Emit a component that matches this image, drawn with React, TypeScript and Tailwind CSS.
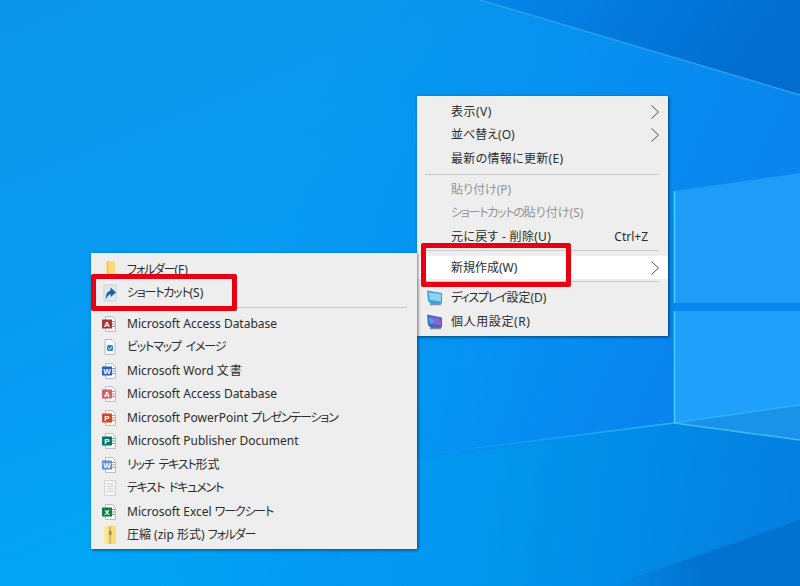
const Wallpaper = () => (
  <svg className="absolute inset-0 w-[800px] h-[586px]" viewBox="0 0 800 586">
    <defs>
      <linearGradient id="bg" x1="0" y1="0" x2="0.55" y2="1">
        <stop offset="0" stopColor="#0b95e8" />
        <stop offset="0.55" stopColor="#079df4" />
        <stop offset="1" stopColor="#00aef6" />
      </linearGradient>
      <linearGradient id="side" x1="0.45" y1="0" x2="1" y2="0.2">
        <stop offset="0" stopColor="#0088f0" stopOpacity="0" />
        <stop offset="1" stopColor="#0a84ee" stopOpacity="1" />
      </linearGradient>
      <linearGradient id="beam" x1="0" y1="0" x2="1" y2="0.2">
        <stop offset="0" stopColor="#0486e8" />
        <stop offset="1" stopColor="#026ccf" />
      </linearGradient>
      <linearGradient id="floor" gradientUnits="userSpaceOnUse" x1="340" y1="480" x2="800" y2="540">
        <stop offset="0" stopColor="#00a6f5" stopOpacity="0" />
        <stop offset="0.35" stopColor="#0096ec" />
        <stop offset="1" stopColor="#047ee0" />
      </linearGradient>
      <linearGradient id="wedge" gradientUnits="userSpaceOnUse" x1="610" y1="586" x2="800" y2="540">
        <stop offset="0" stopColor="#0272d0" stopOpacity="0" />
        <stop offset="0.5" stopColor="#0272d0" />
      </linearGradient>
      <linearGradient id="floorLine" x1="0" y1="0" x2="1" y2="0">
        <stop offset="0" stopColor="#30c0ff" stopOpacity="0" />
        <stop offset="1" stopColor="#30c4ff" stopOpacity="0.8" />
      </linearGradient>
    </defs>
    <rect width="800" height="586" fill="url(#bg)" />
    <rect width="800" height="586" fill="url(#side)" />
    <polygon points="480,0 800,0 800,95" fill="url(#beam)" />
    <path d="M480 0 L800 95" stroke="#2f9ff0" strokeWidth="1.5" fill="none" />
    <polygon points="340,472 674,423 800,440 800,586 340,586" fill="url(#floor)" />
    <polygon points="610,586 800,520 800,586" fill="url(#wedge)" />
    <path d="M420 455 L674 423" stroke="url(#floorLine)" strokeWidth="1.5" fill="none" />
    <polygon points="674,191 800,173 800,303 674,303" fill="#1f9cf8" />
    <polygon points="674,311 800,311 800,405 674,423" fill="#1fa0fa" />
    <polygon points="674,423 800,405 800,440" fill="#1b92ea" />
    <path d="M674.5 191 V303 M674.5 311 V423" stroke="#3fd4fa" strokeWidth="1.5" fill="none" />
    <path d="M674 423 L800 405" stroke="#38bcfa" strokeWidth="1" fill="none" />
    <path d="M674 423 L800 440" stroke="#45c8fa" strokeWidth="1.5" fill="none" opacity="0.8" />
  </svg>
)

const FileIcon = ({ color, letter, faded }: { color: string; letter: string; faded?: boolean }) => (
  <svg width="18" height="18" viewBox="0 0 18 18">
    <path d="M4.500 1.500h7l3 3v12h-10z" fill="#fafafa" stroke="#b9bcc0" />
    <path d="M11 6.500h3M11 9h3M11 11.500h3" stroke={color} opacity="0.6" />
    <rect x="1" y="4.500" width="10" height="9" rx="0.5" fill={color} opacity={faded ? 0.8 : 1} />
    <text x="6" y="12" textAnchor="middle" fontSize="8" fontWeight="700" fontFamily="Liberation Sans, sans-serif" fill="#fff">
      {letter}
    </text>
  </svg>
)

const FolderIcon = () => (
  <svg width="18" height="18" viewBox="0 0 18 18">
    <path d="M5.500 0h7.500l1 3v15H5.500z" fill="#f8dc7c" />
    <path d="M5.500 0h2.500v18H5.500z" fill="#f3cb5a" />
  </svg>
)

const ShortcutIcon = () => (
  <svg width="18" height="18" viewBox="0 0 18 18">
    <path d="M3 1h12v16H3z" fill="#e1e7ee" stroke="#cdd2d8" />
    <path d="M5 15c-.5-5 1.500-7.500 4.500-8.500V3.500l5.500 5-5.500 4.500V10c-1.500.3-3 2-4.500 5z" fill="#1b5fa8" />
  </svg>
)

const BitmapIcon = () => (
  <svg width="18" height="18" viewBox="0 0 18 18">
    <path d="M4 1.500h7l3 3v12H4z" fill="#fafafa" stroke="#b9bcc0" />
    <rect x="6" y="7" width="6" height="6" rx="1.500" fill="#2a86d8" />
    <path d="M7.500 10.500l1.200 1 2-2.500" stroke="#fff" fill="none" />
  </svg>
)

const TextIcon = () => (
  <svg width="18" height="18" viewBox="0 0 18 18">
    <path d="M3.500 1.500h11v15h-11z" fill="#f5f5f5" stroke="#d2d2d2" />
    <path d="M5.500 5h7M5.500 7.500h7M5.500 10h7M5.500 12.500h7" stroke="#cfcfcf" />
  </svg>
)

const ZipIcon = () => (
  <svg width="18" height="18" viewBox="0 0 18 18">
    <path d="M3 0h12v18H3z" fill="#f8dd78" />
    <path d="M3 0h3v18H3z" fill="#fbe89a" />
    <path d="M8.500 0h1.500v18H8.500z" fill="#c2ae74" />
    <rect x="8" y="5" width="2.500" height="4" fill="#9a8a60" />
  </svg>
)

const DisplayIcon = () => (
  <svg width="18" height="18" viewBox="0 0 18 18">
    <path d="M1 1.500l15 2.500v9.500l-1 1.500H5L2 12z" fill="#3d9ede" />
    <path d="M2.500 3.500l12.500 1.500v7.500L3.800 11z" fill="#8fd1f2" />
    <path d="M4 15.500h11" stroke="#7d97aa" strokeWidth="1.500" />
  </svg>
)

const PersonalIcon = () => (
  <svg width="18" height="18" viewBox="0 0 18 18">
    <path d="M1 1.500l15 3v9l-1 1.500H5L2 12z" fill="#3b6cb0" />
    <path d="M2.500 3.500l12.500 2.500v6.500L3.800 11z" fill="#8b5fd6" />
    <path d="M3 4.500l6 4-5 2.500z" fill="#46a8e8" />
    <path d="M4 15.500h11" stroke="#7d8aa0" strokeWidth="1.500" />
  </svg>
)

const Arrow = () => (
  <svg width="10" height="16" viewBox="0 0 10 16" className="mr-[8px] shrink-0">
    <path d="M1.500 1.500L8.500 8L1.500 14.500" fill="none" stroke="#4a4a4a" strokeWidth="1" />
  </svg>
)

// kana in the reference font runs much narrower than Noto's
const Kana = ({ children }: { children: React.ReactNode }) => (
  <span className="tracking-[-1.2px] [word-spacing:3px]">{children}</span>
)

const MainRow = ({ label, icon, arrow, disabled, hint, active }: {
  label: React.ReactNode
  icon?: React.ReactNode
  arrow?: boolean
  disabled?: boolean
  hint?: string
  active?: boolean
}) => (
  <div className={`flex items-center h-[23.5px] text-[12px] ${disabled ? "text-[#939393]" : "text-[#2b2b2b]"} ${active ? "bg-white" : ""}`}>
    <span className="w-[34px] flex justify-center pl-[1px]">{icon}</span>
    <span className="flex-1 whitespace-nowrap">{label}</span>
    {hint && <span className="mr-[20px]">{hint}</span>}
    {arrow && <Arrow />}
  </div>
)

const SubRow = ({ label, icon }: { label: React.ReactNode; icon: React.ReactNode }) => (
  <div className="flex items-center h-[23.5px] text-[12px] text-[#2b2b2b]">
    <span className="w-[36px] flex justify-center pl-[1px]">{icon}</span>
    <span className="whitespace-nowrap">{label}</span>
  </div>
)

export default function App() {
  return (
    <div
      className="relative w-[800px] h-[586px] overflow-hidden [font-feature-settings:'palt']"
      style={{ fontFamily: '"Noto Sans", "Noto Sans CJK JP", sans-serif' }}
    >
      <Wallpaper />

      <div className="absolute left-[417px] top-[96px] w-[251px] h-[240px] pt-[4px] bg-[#eeeeee] shadow-[1px_1px_3px_rgba(0,0,0,0.55)]">
        <MainRow label={<span className="tracking-[0.5px]">表示(V)</span>} arrow />
        <MainRow label="並べ替え(O)" arrow />
        <MainRow label={<span className="tracking-[0.3px]">最新の情報に更新(E)</span>} />
        <div className="h-px bg-[#c8c8c8] ml-[8px] mr-[9px] mt-[3px] mb-[3.5px]" />
        <MainRow label="貼り付け(P)" disabled />
        <MainRow label={<><Kana>ショートカットの</Kana>貼り付け(S)</>} disabled />
        <MainRow label={<span className="tracking-[0.3px]">元に戻す - 削除(U)</span>} hint="Ctrl+Z" />
        <div className="h-px bg-[#c8c8c8] ml-[8px] mr-[9px] mt-[1.25px] mb-[5px]" />
        <MainRow label="新規作成(W)" arrow active />
        <div className="h-px bg-[#c8c8c8] ml-[8px] mr-[9px] mt-[1.75px] mb-[4.25px]" />
        <MainRow label={<><Kana>ディスプレイ</Kana>設定(D)</>} icon={<DisplayIcon />} />
        <MainRow label={<span className="tracking-[0.6px]">個人用設定(R)</span>} icon={<PersonalIcon />} />
      </div>

      <div className="absolute left-[91px] top-[253px] w-[326px] h-[296px] pt-[5px] bg-[#eeeeee] shadow-[1px_1px_3px_rgba(0,0,0,0.55)]">
        <SubRow label={<><Kana>フォルダー</Kana>(F)</>} icon={<FolderIcon />} />
        <SubRow label={<><Kana>ショートカット</Kana>(S)</>} icon={<ShortcutIcon />} />
        <div className="h-px bg-[#c8c8c8] ml-[8px] mr-[10px] mt-[2px] mb-[3.75px]" />
        <SubRow label="Microsoft Access Database" icon={<FileIcon color="#a4373a" letter="A" />} />
        <SubRow label={<Kana>ビットマップ イメージ</Kana>} icon={<BitmapIcon />} />
        <SubRow label={<>Microsoft Word <span className="tracking-[1px]">文書</span></>} icon={<FileIcon color="#2b5fc0" letter="W" />} />
        <SubRow label="Microsoft Access Database" icon={<FileIcon color="#c0404a" letter="A" faded />} />
        <SubRow label={<>Microsoft PowerPoint <Kana>プレゼンテーション</Kana></>} icon={<FileIcon color="#d2491f" letter="P" />} />
        <SubRow label="Microsoft Publisher Document" icon={<FileIcon color="#077568" letter="P" />} />
        <SubRow label={<><Kana>リッチ テキスト</Kana>形式</>} icon={<FileIcon color="#3f75c8" letter="W" faded />} />
        <SubRow label={<Kana>テキスト ドキュメント</Kana>} icon={<TextIcon />} />
        <SubRow label={<>Microsoft Excel <Kana>ワークシート</Kana></>} icon={<FileIcon color="#107c41" letter="X" />} />
        <SubRow label={<>圧縮 (zip 形式) <Kana>フォルダー</Kana></>} icon={<ZipIcon />} />
      </div>

      {/* red callouts */}
      <div className="absolute left-[421px] top-[243px] w-[150px] h-[44px] border-[5px] border-[#e60012] rounded-[2px]" />
      <div className="absolute left-[91px] top-[274px] w-[146px] h-[37px] border-[5px] border-[#e60012] rounded-[2px]" />
    </div>
  )
}
